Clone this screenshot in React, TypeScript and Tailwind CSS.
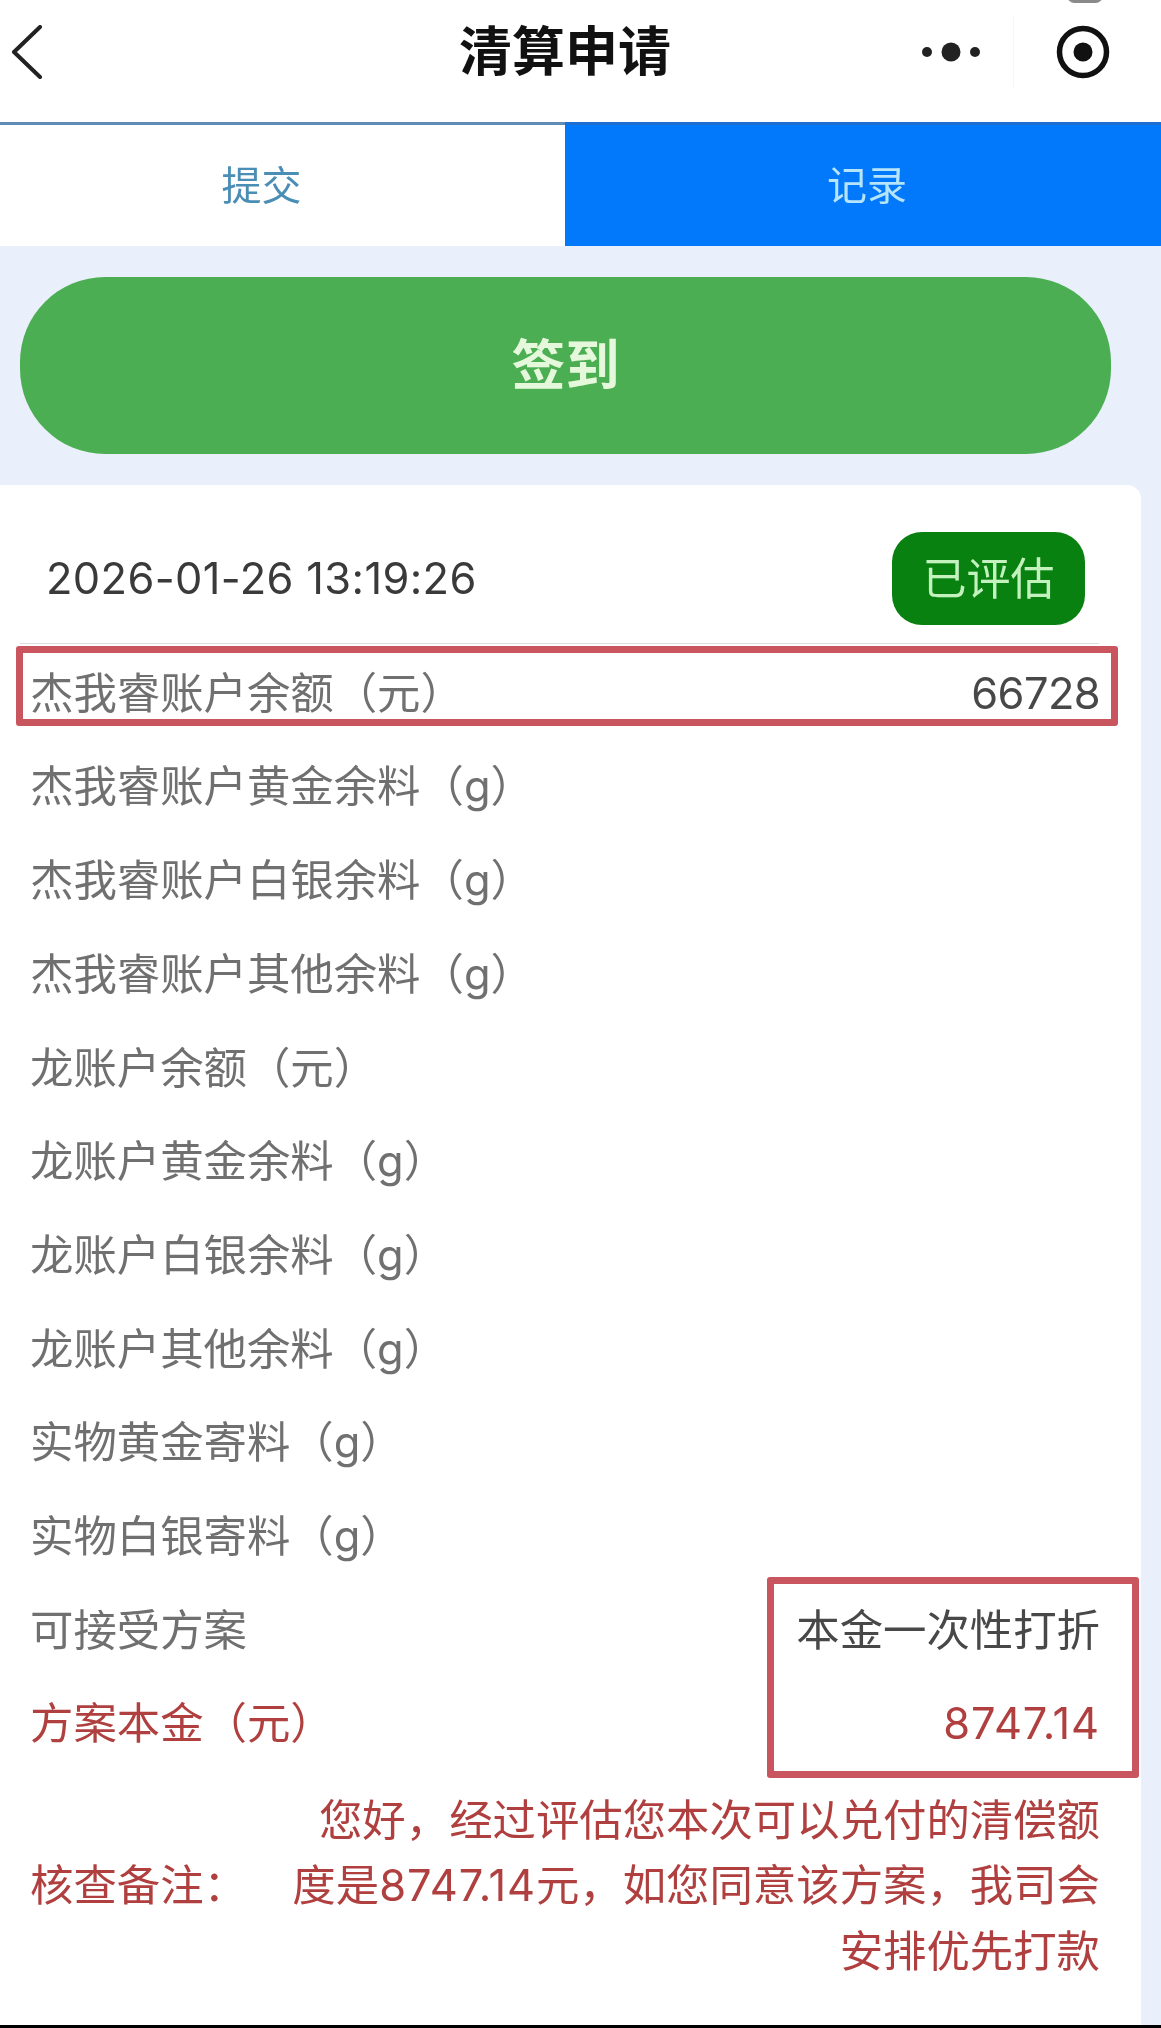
const cjk = "font-['Inter','Noto_Sans_CJK_SC',sans-serif]";

function Row({ label, value, red, valueClass }: { label: string; value?: string; red?: boolean; valueClass?: string }) {
  return (
    <div className={`h-[93.7px] flex items-center justify-between pl-[30px] pr-[41px] text-[43.4px] font-normal ${red ? 'text-[#b0403f]' : 'text-[#707070]'}`}>
      <span>{label}</span>
      {value && <span className={`${red ? 'text-[#b0403f]' : 'text-[#484848]'} ${valueClass ?? ''}`}>{value}</span>}
    </div>
  );
}

const labels = [
  '杰我睿账户黄金余料（g）',
  '杰我睿账户白银余料（g）',
  '杰我睿账户其他余料（g）',
  '龙账户余额（元）',
  '龙账户黄金余料（g）',
  '龙账户白银余料（g）',
  '龙账户其他余料（g）',
  '实物黄金寄料（g）',
  '实物白银寄料（g）',
];

export default function App() {
  return (
    <div className={`relative w-[1161px] h-[2028px] overflow-hidden bg-[#e9f0fb] flex flex-col blur-[0.5px] ${cjk}`}>
      <header className="relative h-[122px] pb-[18px] bg-white grid grid-cols-[360px_410px_391px] items-center shrink-0">
        <div className="pl-[11px] flex items-center">
          <svg width="32" height="54" viewBox="0 0 32 54" fill="none" stroke="#222222" strokeWidth="4" strokeLinecap="round" strokeLinejoin="round">
            <path d="M29 2 L3 27 L29 52" />
          </svg>
        </div>
        <h1 className="text-center text-[53px] font-bold text-[#111111] leading-none">清算申请</h1>
        <div className="flex items-center pl-[152px]">
          <svg width="58" height="24" viewBox="0 0 58 24" fill="#222222">
            <circle cx="5" cy="12" r="5" />
            <circle cx="29" cy="12" r="9.5" />
            <circle cx="53" cy="12" r="5" />
          </svg>
          <div className="w-px h-[70px] bg-[#f6f6f6] ml-[33px]" />
          <svg className="ml-[42px]" width="54" height="54" viewBox="0 0 54 54" fill="none">
            <circle cx="27" cy="27" r="23.5" stroke="#111111" strokeWidth="5.5" />
            <circle cx="27" cy="27" r="9.5" fill="#111111" />
          </svg>
        </div>
        <div className="absolute top-[-12px] right-[58px] w-[36px] h-[15px] rounded-full bg-[#8a8a8a]" />
      </header>

      <nav className="grid grid-cols-[565px_596px] h-[124px] shrink-0">
        <div className="bg-white border-t-[3px] border-[#5f8db5] flex items-center justify-center pr-[42px] text-[40px] font-normal text-[#4a8db5]">提交</div>
        <div className="bg-[#0279fb] border-t-[3px] border-[#1a6fd0] flex items-center justify-center pl-[8px] text-[40px] font-normal text-[#b5e4fb]">记录</div>
      </nav>

      <div className="pt-[31px] pb-[31px] pl-[20px] pr-[50px] shrink-0">
        <button className="w-full h-[177px] rounded-[85px] bg-[#4cae53] text-[54px] font-bold text-[#e6f8dc]">签到</button>
      </div>

      <main className="relative w-[1141px] flex-1 bg-white rounded-tr-[14px]">
        <div className="mt-[47px] mb-[18px] h-[93px] flex items-center justify-between pl-[46px] pr-[56px]">
          <span className="text-[43.4px] font-normal text-[#3a3a3a] tracking-[0.37px]">2026-01-26 13:19:26</span>
          <span className="w-[193px] h-[93px] rounded-[30px] bg-[#088110] flex items-center justify-center text-[44px] font-normal text-[#c4f2bf]">已评估</span>
        </div>
        <div className="ml-[20px] mr-[42px] h-px bg-[#dedede] mb-[2.5px]" />

        <Row label="杰我睿账户余额（元）" value="66728" valueClass="tracking-[-0.6px]" />
        {labels.map((l) => (
          <Row key={l} label={l} />
        ))}
        <Row label="可接受方案" value="本金一次性打折" valueClass="text-[#3f3f3f]" />
        <Row label="方案本金（元）" value="8747.14" red valueClass="tracking-[0.9px]" />

        <div className="flex items-center justify-between pl-[30px] pr-[41px] pt-[17px] text-[43.4px] font-normal text-[#b0403f] leading-[65.5px]">
          <span className="whitespace-nowrap">核查备注：</span>
          <p className="text-right whitespace-nowrap">
            您好，经过评估您本次可以兑付的清偿额
            <br />
            度是<span className="tracking-[0.9px]">8747.14</span>元，如您同意该方案，我司会
            <br />
            安排优先打款
          </p>
        </div>

        <div className="absolute top-[161px] left-[16px] w-[1102px] h-[80px] border-[7px] border-[#c9565e] rounded-[3px]" />
        <div className="absolute top-[1092px] left-[767px] w-[372px] h-[201px] border-[7px] border-[#c9565e] rounded-[3px]" />
      </main>

      <div className="h-[3px] bg-black shrink-0" />
    </div>
  );
}
